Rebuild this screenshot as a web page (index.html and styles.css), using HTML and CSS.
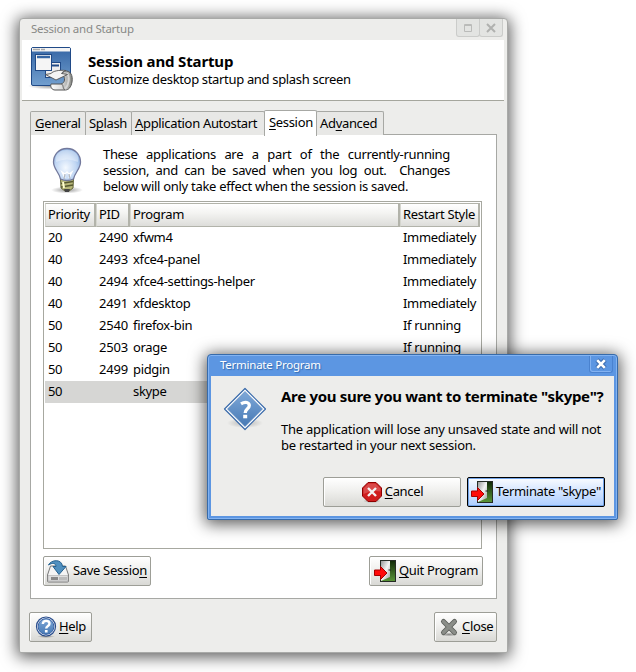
FILE: index.html
```html
<!DOCTYPE html>
<html lang="en">
<head>
<meta charset="utf-8">
<title>Session and Startup</title>
<link rel="stylesheet" href="styles.css">
</head>
<body>
<svg class="defs" width="0" height="0" aria-hidden="true">
  <defs>
    <linearGradient id="blue" x1="0" y1="0" x2="0" y2="1"><stop offset="0" stop-color="#3465a4"/><stop offset="1" stop-color="#729fcf"/></linearGradient>
    <linearGradient id="blueDown" x1="0" y1="0" x2="0" y2="1"><stop offset="0" stop-color="#7fa8d8"/><stop offset="1" stop-color="#4679b5"/></linearGradient>
    <linearGradient id="paper" x1="0" y1="0" x2="1" y2="0"><stop offset="0" stop-color="#fff"/><stop offset=".5" stop-color="#ddd"/><stop offset="1" stop-color="#888a85"/></linearGradient>
    <linearGradient id="green" x1="0" y1="0" x2="0" y2="1"><stop offset="0" stop-color="#102808"/><stop offset="1" stop-color="#5a9638"/></linearGradient>
    <linearGradient id="door" x1="0" y1="0" x2="1" y2="1"><stop offset="0" stop-color="#999"/><stop offset=".5" stop-color="#f5f5f5"/><stop offset="1" stop-color="#999"/></linearGradient>
    <radialGradient id="glass" cx=".45" cy=".6" r=".65"><stop offset="0" stop-color="#f4f9ff"/><stop offset=".6" stop-color="#c0d6f3"/><stop offset="1" stop-color="#83abe0"/></radialGradient>
    <radialGradient id="shade"><stop offset="0" stop-color="#000" stop-opacity=".4"/><stop offset="1" stop-color="#000" stop-opacity="0"/></radialGradient>
    <symbol id="exit" viewBox="0 0 24 24">
      <rect x="7.500" y="1.500" width="15" height="21" fill="url(#green)" stroke="#252b25"/>
      <path d="M8 2h9v16l-9 4z" fill="url(#door)"/>
      <path d="M15.500 11h2.500" stroke="#222"/>
      <path d="M1.500 11h6v-3.500l6.500 6.500-6.500 6.500v-4h-6z" fill="#ff0a0a" stroke="#a40000"/>
    </symbol>
  </defs>
</svg>

<main class="window">
  <header class="titlebar">
    <span class="title">Session and Startup</span>
    <div class="controls">
      <i class="control"><svg width="22" height="17"><path d="M7.500 5.500h7v7h-7zM7 6.500h8" class="grey-line"/></svg></i>
      <i class="control"><svg width="22" height="17"><path d="M7 5l8 8M15 5l-8 8" class="grey-cross"/></svg></i>
    </div>
  </header>

  <section class="banner">
    <svg class="banner-icon" width="48" height="48" viewBox="0 0 48 48">
      <ellipse cx="22" cy="41" rx="22" ry="3.500" fill="url(#shade)"/>
      <rect x="3.500" y="2.500" width="39" height="38" rx="1.500" fill="url(#blue)" stroke="#204a87"/>
      <path d="M4 3h38v3.500H4z" fill="#f4f4f4"/>
      <path d="M5 4.500h7M13 4.500h4" stroke="#aaa" stroke-width="1.500"/>
      <rect x="17.500" y="17.500" width="15" height="15" fill="#eee" stroke="#204a87"/>
      <path d="M19 20.500h12" stroke="#204a87" stroke-width="2"/>
      <rect x="7.500" y="9.500" width="16" height="16" fill="#f5f5f5" stroke="#204a87"/>
      <path d="M9 12h13" stroke="#3465a4" stroke-width="2.500"/>
      <path d="M36 26C43 25 45 31 44 37C43 42 41 45 37 45H27C24 45 22 42 23 39H33C37 38 38 33 34 29z" fill="url(#paper)" stroke="#555"/>
      <path d="M39 28C42 32 41 40 37 44" fill="none" stroke="#d5d5d5" stroke-width="2"/>
      <path d="M33 39C36 39 34 43 37 45" fill="none" stroke="#666"/>
      <path d="M17.500 29.500L23 28.500C25 26 31 24.800 38 25.500C35 26.500 34 27.500 33.500 28.500L39.500 29.500L28 35z" fill="#f4f4f4" stroke="#555" stroke-width=".9"/>
    </svg>
    <div class="banner-text">
      <h1 class="banner-title">Session and Startup</h1>
      <p class="banner-sub">Customize desktop startup and splash screen</p>
    </div>
  </section>

  <nav class="tabs">
    <span class="tab tab-general"><u>G</u>eneral</span>
    <span class="tab tab-splash">S<u>p</u>lash</span>
    <span class="tab tab-auto"><u>A</u>pplication Autostart</span>
    <span class="tab tab-session active"><u>S</u>ession</span>
    <span class="tab tab-advanced">Ad<u>v</u>anced</span>
  </nav>

  <section class="panel">
    <div class="intro">
      <svg class="bulb" width="48" height="48" viewBox="0 0 48 48">
        <ellipse cx="24" cy="44" rx="16" ry="3.500" fill="url(#shade)"/>
        <path d="M17.500 33L18 42L22 45L26 45L30 42L30.500 33z" fill="#b7b779" stroke="#66683c"/>
        <path d="M18 37.500l12-2M18 41l12-2" stroke="#56582f" stroke-width="1.300"/>
        <path d="M20 36l1 6" stroke="#ffffd0" stroke-width="2"/>
        <path d="M21 43h6l-1 3h-4z" fill="#444"/>
        <path d="M24 2.500C15.500 2.500 10.500 9 10.500 16C10.500 23 16 26 17.500 33Q24 36 30.500 33C32 26 37.500 23 37.500 16C37.500 9 32.500 2.500 24 2.500z" fill="url(#glass)" stroke="#73799c" stroke-width="1.300"/>
        <path d="M13 16C11 7 18 4 24 4S37 7 35 16Q24 11 13 16z" fill="#fff" opacity=".35"/>
        <path d="M22 32L19 26L22 28L24 26L26 28L29 26L26 32" fill="none" stroke="#fff" stroke-width="1.300"/>
        <path d="M21 33l1-5M27 33l-1-5" stroke="#999" stroke-width=".7"/>
      </svg>
      <div class="intro-text">
        <p class="line">These applications are a part of the currently-running</p>
        <p class="line">session, and can be saved when you log out.&nbsp; Changes</p>
        <p class="line last">below will only take effect when the session is saved.</p>
      </div>
    </div>

    <div class="table">
      <div class="row head"><span>Priority</span><span>PID</span><span>Program</span><span>Restart Style</span></div>
      <div class="row"><span>20</span><span class="pid">2490</span><span>xfwm4</span><span>Immediately</span></div>
      <div class="row"><span>40</span><span class="pid">2493</span><span>xfce4-panel</span><span>Immediately</span></div>
      <div class="row"><span>40</span><span class="pid">2494</span><span>xfce4-settings-helper</span><span>Immediately</span></div>
      <div class="row"><span>40</span><span class="pid">2491</span><span>xfdesktop</span><span>Immediately</span></div>
      <div class="row"><span>50</span><span class="pid">2540</span><span>firefox-bin</span><span>If running</span></div>
      <div class="row"><span>50</span><span class="pid">2503</span><span>orage</span><span>If running</span></div>
      <div class="row"><span>50</span><span class="pid">2499</span><span>pidgin</span><span>If running</span></div>
      <div class="row selected"><span>50</span><span></span><span>skype</span><span></span></div>
    </div>

    <div class="actions">
      <button class="button save">
        <svg width="24" height="24" viewBox="0 0 24 24">
          <path d="M4.500 7h15l3 9v6q0 1-1 1h-19q-1 0-1-1v-6z" fill="#f4f4f4" stroke="#777"/>
          <path d="M2 16.500h20V22H2z" fill="#ddd" stroke="#aaa" stroke-width=".6"/>
          <path d="M5 19.500h7" stroke="#888" stroke-width="3"/><path d="M14 18v3M16 18v3M18 18v3M20 18v3" stroke="#999"/>
          <path d="M2.500 6C5 .5 16 -.5 16.500 7.500h3.500L13 15.500L7 7.500h3C10 4 6 3.500 2.500 6z" fill="#5090bf" stroke="#256190"/>
        </svg><span>Save Sessio<u>n</u></span>
      </button>
      <button class="button quit"><svg width="24" height="24"><use href="#exit"/></svg><span><u>Q</u>uit Program</span></button>
    </div>
  </section>

  <footer class="footer">
    <button class="button help">
      <svg width="22" height="22" viewBox="0 0 22 22">
        <ellipse cx="11" cy="20.500" rx="9" ry="1.500" fill="url(#shade)"/>
        <circle cx="11" cy="10.500" r="9.500" fill="#fff" stroke="#284c8c" stroke-width="1.200"/>
        <circle cx="11" cy="10.500" r="7.900" fill="url(#blueDown)" stroke="#3a63a5"/>
        <path d="M7.800 8C8 3.800 14.500 4 14.500 7.800C14.500 10 11.200 10 11.200 12.500" fill="none" stroke="#fff" stroke-width="2.400"/><path d="M9.900 14h2.700v2.500H9.900z" fill="#fff"/>
      </svg><span><u>H</u>elp</span>
    </button>
    <button class="button close">
      <svg width="20" height="20" viewBox="0 0 20 20">
        <ellipse cx="10" cy="17.500" rx="9" ry="2" fill="url(#shade)"/>
        <path d="M4.500 4.500l11 11M15.500 4.500l-11 11" stroke="#5d605c" stroke-width="5" stroke-linecap="round"/>
        <path d="M4.500 4.500l11 11M15.500 4.500l-11 11" stroke="#8b8e89" stroke-width="3.200" stroke-linecap="round"/>
      </svg><span><u>C</u>lose</span>
    </button>
  </footer>
</main>

<section class="dialog" role="dialog">
  <header class="dialog-bar">
    <span class="dialog-title">Terminate Program</span>
    <i class="dialog-close"><svg width="22" height="16"><path d="M7 4l8 8M15 4l-8 8" stroke="#3f70b4" stroke-width="4.600"/><path d="M7.200 4.200l7.600 7.600M14.800 4.200l-7.600 7.600" stroke="#fff" stroke-width="2.600"/></svg></i>
  </header>
  <div class="dialog-body">
    <div class="message">
      <svg class="question" width="48" height="48" viewBox="0 0 48 48">
        <ellipse cx="24" cy="38" rx="18" ry="5" fill="url(#shade)" opacity=".6"/>
        <path d="M24 3.500L44.500 24L24 44.500L3.500 24z" fill="#fff" stroke="#3869aa" stroke-width="1.200" stroke-linejoin="round"/>
        <path d="M24 6.500L41.500 24L24 41.500L6.500 24z" fill="url(#blueDown)" stroke="#507fb8" stroke-width=".6"/>
        <path d="M20 18.800C24.500 16 28.300 17.500 28.300 20.500C28.300 24 24.200 23.500 24.200 28" fill="none" stroke="#fff" stroke-width="3.300"/><path d="M22.200 29.800h4v3.500h-4z" fill="#fff"/>
      </svg>
      <div class="message-text">
        <h2 class="message-title">Are you sure you want to terminate "skype"?</h2>
        <p class="detail">The application will lose any unsaved state and will not</p>
        <p class="detail detail-end">be restarted in your next session.</p>
      </div>
    </div>
    <div class="dialog-actions">
      <button class="button cancel">
        <svg width="22" height="22" viewBox="0 0 22 22">
          <ellipse cx="11" cy="20" rx="9" ry="2" fill="url(#shade)"/>
          <path d="M7 1.500h8l5.500 5.500v8L15 20.500H7L1.500 15V7z" fill="#d01d1d" stroke="#8d0000"/>
          <path d="M7.500 2.500h7l5 5v3Q11 9 2.500 13V7.500z" fill="#fff" opacity=".2"/>
          <path d="M7 7l8 8M15 7l-8 8" stroke="#f4f4f4" stroke-width="2.400"/>
        </svg><span><u>C</u>ancel</span>
      </button>
      <button class="button terminate"><svg width="24" height="24"><use href="#exit"/></svg><span>Terminate "skype"</span></button>
    </div>
  </div>
</section>
</body>
</html>
```

FILE: styles.css
```css
* { box-sizing: border-box; }
body { margin: 0; width: 636px; height: 672px; overflow: hidden; position: relative; background: #fff; color: #000; font: 13px/16px "Noto Sans", "Open Sans", sans-serif; letter-spacing: -.33px; }
h1, h2, p { margin: 0; }
svg { display: block; flex: none; fill: none; }
.defs { position: absolute; }
u { text-underline-offset: 2px; text-decoration-thickness: 1px; text-decoration-skip-ink: none; }

.window { width: 489px; height: 635px; margin: 18px 0 0 19px; border: 1px solid #a9aaa8; border-radius: 4px 4px 2px 2px; padding: 0 3px 0 2px; background: #ededeb; box-shadow: 0 2px 16px 2px rgba(0,0,0,.65); }
.titlebar { height: 21px; display: flex; justify-content: space-between; padding-left: 9px; }
.title { font-size: 11.500px; line-height: 20px; letter-spacing: -.25px; color: #888986; white-space: nowrap; }
.controls { display: flex; margin-right: 1px; }
.control { display: block; width: 24px; height: 18px; margin-left: -1px; border: 1px solid #cbccca; border-top: 0; border-radius: 0 0 3px 3px; background: #e3e4e2; }
.grey-line { stroke: #babbb9; }
.grey-cross { stroke: #b0b1af; stroke-width: 2; }

.banner { height: 61px; background: #fff; border-bottom: 1px solid #a5a69d; display: flex; }
.banner-icon { margin: 5px 11px 0 6px; }
.banner-text { padding: 13px 0 0 1px; white-space: nowrap; }
.banner-title { font-size: 15px; line-height: 17px; font-weight: 700; letter-spacing: -.15px; }
.banner-sub { line-height: 18px; }

.tabs { display: flex; align-items: flex-end; height: 34px; margin-left: 8px; }
.tab { height: 24px; border: 1px solid #a7a8a4; border-bottom: 0; border-radius: 2px 2px 0 0; margin-right: -1px; background: #e8e8e6; padding: 3px 0 0 3px; white-space: nowrap; }
.tab-general { width: 56px; padding-left: 4px; }
.tab-splash { width: 47px; }
.tab-auto { width: 134px; }
.tab-session { width: 53px; padding-left: 4px; }
.tab-advanced { width: 68px; }
.tab.active { height: 26px; margin-bottom: -1px; background: #fff; position: relative; }

.panel { height: 465px; width: 467px; margin: -1px 0 0 8px; border: 1px solid #a7a8a4; background: #fff; padding: 12px 13px 0 12px; }
.intro { display: flex; height: 54px; }
.bulb { margin: -1px 12px 0 0; }
.intro-text { width: 347px; margin-top: -1px; white-space: nowrap; }
.line { text-align: justify; text-align-last: justify; white-space: normal; height: 16px; }
.line.last { text-align-last: left; white-space: nowrap; letter-spacing: -.3px; }

.table { width: 439px; height: 348px; border: 1px solid #a7a8a0; padding: 1px; }
.row { display: grid; grid-template-columns: 51px 34px 270px 80px; height: 22px; line-height: 21px; white-space: nowrap; }
.row span { padding-left: 3px; }
.row .pid { letter-spacing: -.15px; }
.head { height: 24px; line-height: 21px; }
.head span { border: 1px solid #b2b3aa; border-left-color: #d4d5ce; border-right-width: 2px; background: linear-gradient(#fff, #f4f4f2 40%, #ddddda); padding-left: 2px; }
.selected { background: #d6d6d4; }

.actions { display: flex; justify-content: space-between; margin-top: 7px; width: 440px; }
.button { height: 30px; margin: 0; padding: 0 3px; border: 1px solid #9d9e97; border-radius: 2px; background: linear-gradient(#fff, #f0f0ee 45%, #d9d9d5); box-shadow: inset 1px 1px #fff; display: flex; align-items: center; color: #000; font: inherit; letter-spacing: -.33px; white-space: nowrap; }
.button span { position: relative; top: -1px; }
.save { width: 108px; padding-left: 2px; gap: 3px; }
.quit { width: 114px; gap: 2px; }
.footer { display: flex; justify-content: space-between; margin: 13px 7px 0 7px; }
.help { width: 63px; padding-left: 5px; gap: 2px; }
.close { width: 63px; padding-left: 4px; gap: 3px; }

.dialog { position: absolute; left: 207px; top: 354px; width: 411px; height: 166px; padding: 0 3px 3px; background: #5c96e2; border: 1px solid #376baa; border-radius: 4px 4px 2px 2px; box-shadow: inset 0 0 0 1px #82b3f2, 0 2px 16px 2px rgba(0,0,0,.65); }
.dialog-bar { height: 21px; display: flex; justify-content: space-between; }
.dialog-title { padding-left: 9px; color: #fff; font-size: 11.500px; line-height: 20px; letter-spacing: -.25px; text-shadow: 1px 1px 1px #356caf; white-space: nowrap; }
.dialog-close { width: 24px; height: 17px; margin: 1px 1px 0 0; border: 1px solid #4a82cf; border-top: 0; border-radius: 0 0 3px 3px; box-shadow: inset 1px -1px #83b2f1; }
.dialog-body { height: 140px; background: #ededeb; padding: 9px 9px 0 10px; }
.message { display: flex; height: 92px; white-space: nowrap; }
.message-text { padding: 2px 0 0 12px; }
.message-title { font-size: 15px; line-height: 18px; font-weight: 700; letter-spacing: -.3px; }
.detail { margin-top: 16px; letter-spacing: -.24px; }
.detail-end { margin-top: 0; }
.dialog-actions { display: flex; justify-content: flex-end; gap: 6px; }
.cancel { width: 138px; justify-content: center; gap: 2px; }
.terminate { width: 138px; padding: 0 2px; gap: 2px; border-color: #000; background: linear-gradient(#fafcff, #d6e6ff 45%, #adceff); box-shadow: inset 0 0 0 1px #72a4e8; }
```
